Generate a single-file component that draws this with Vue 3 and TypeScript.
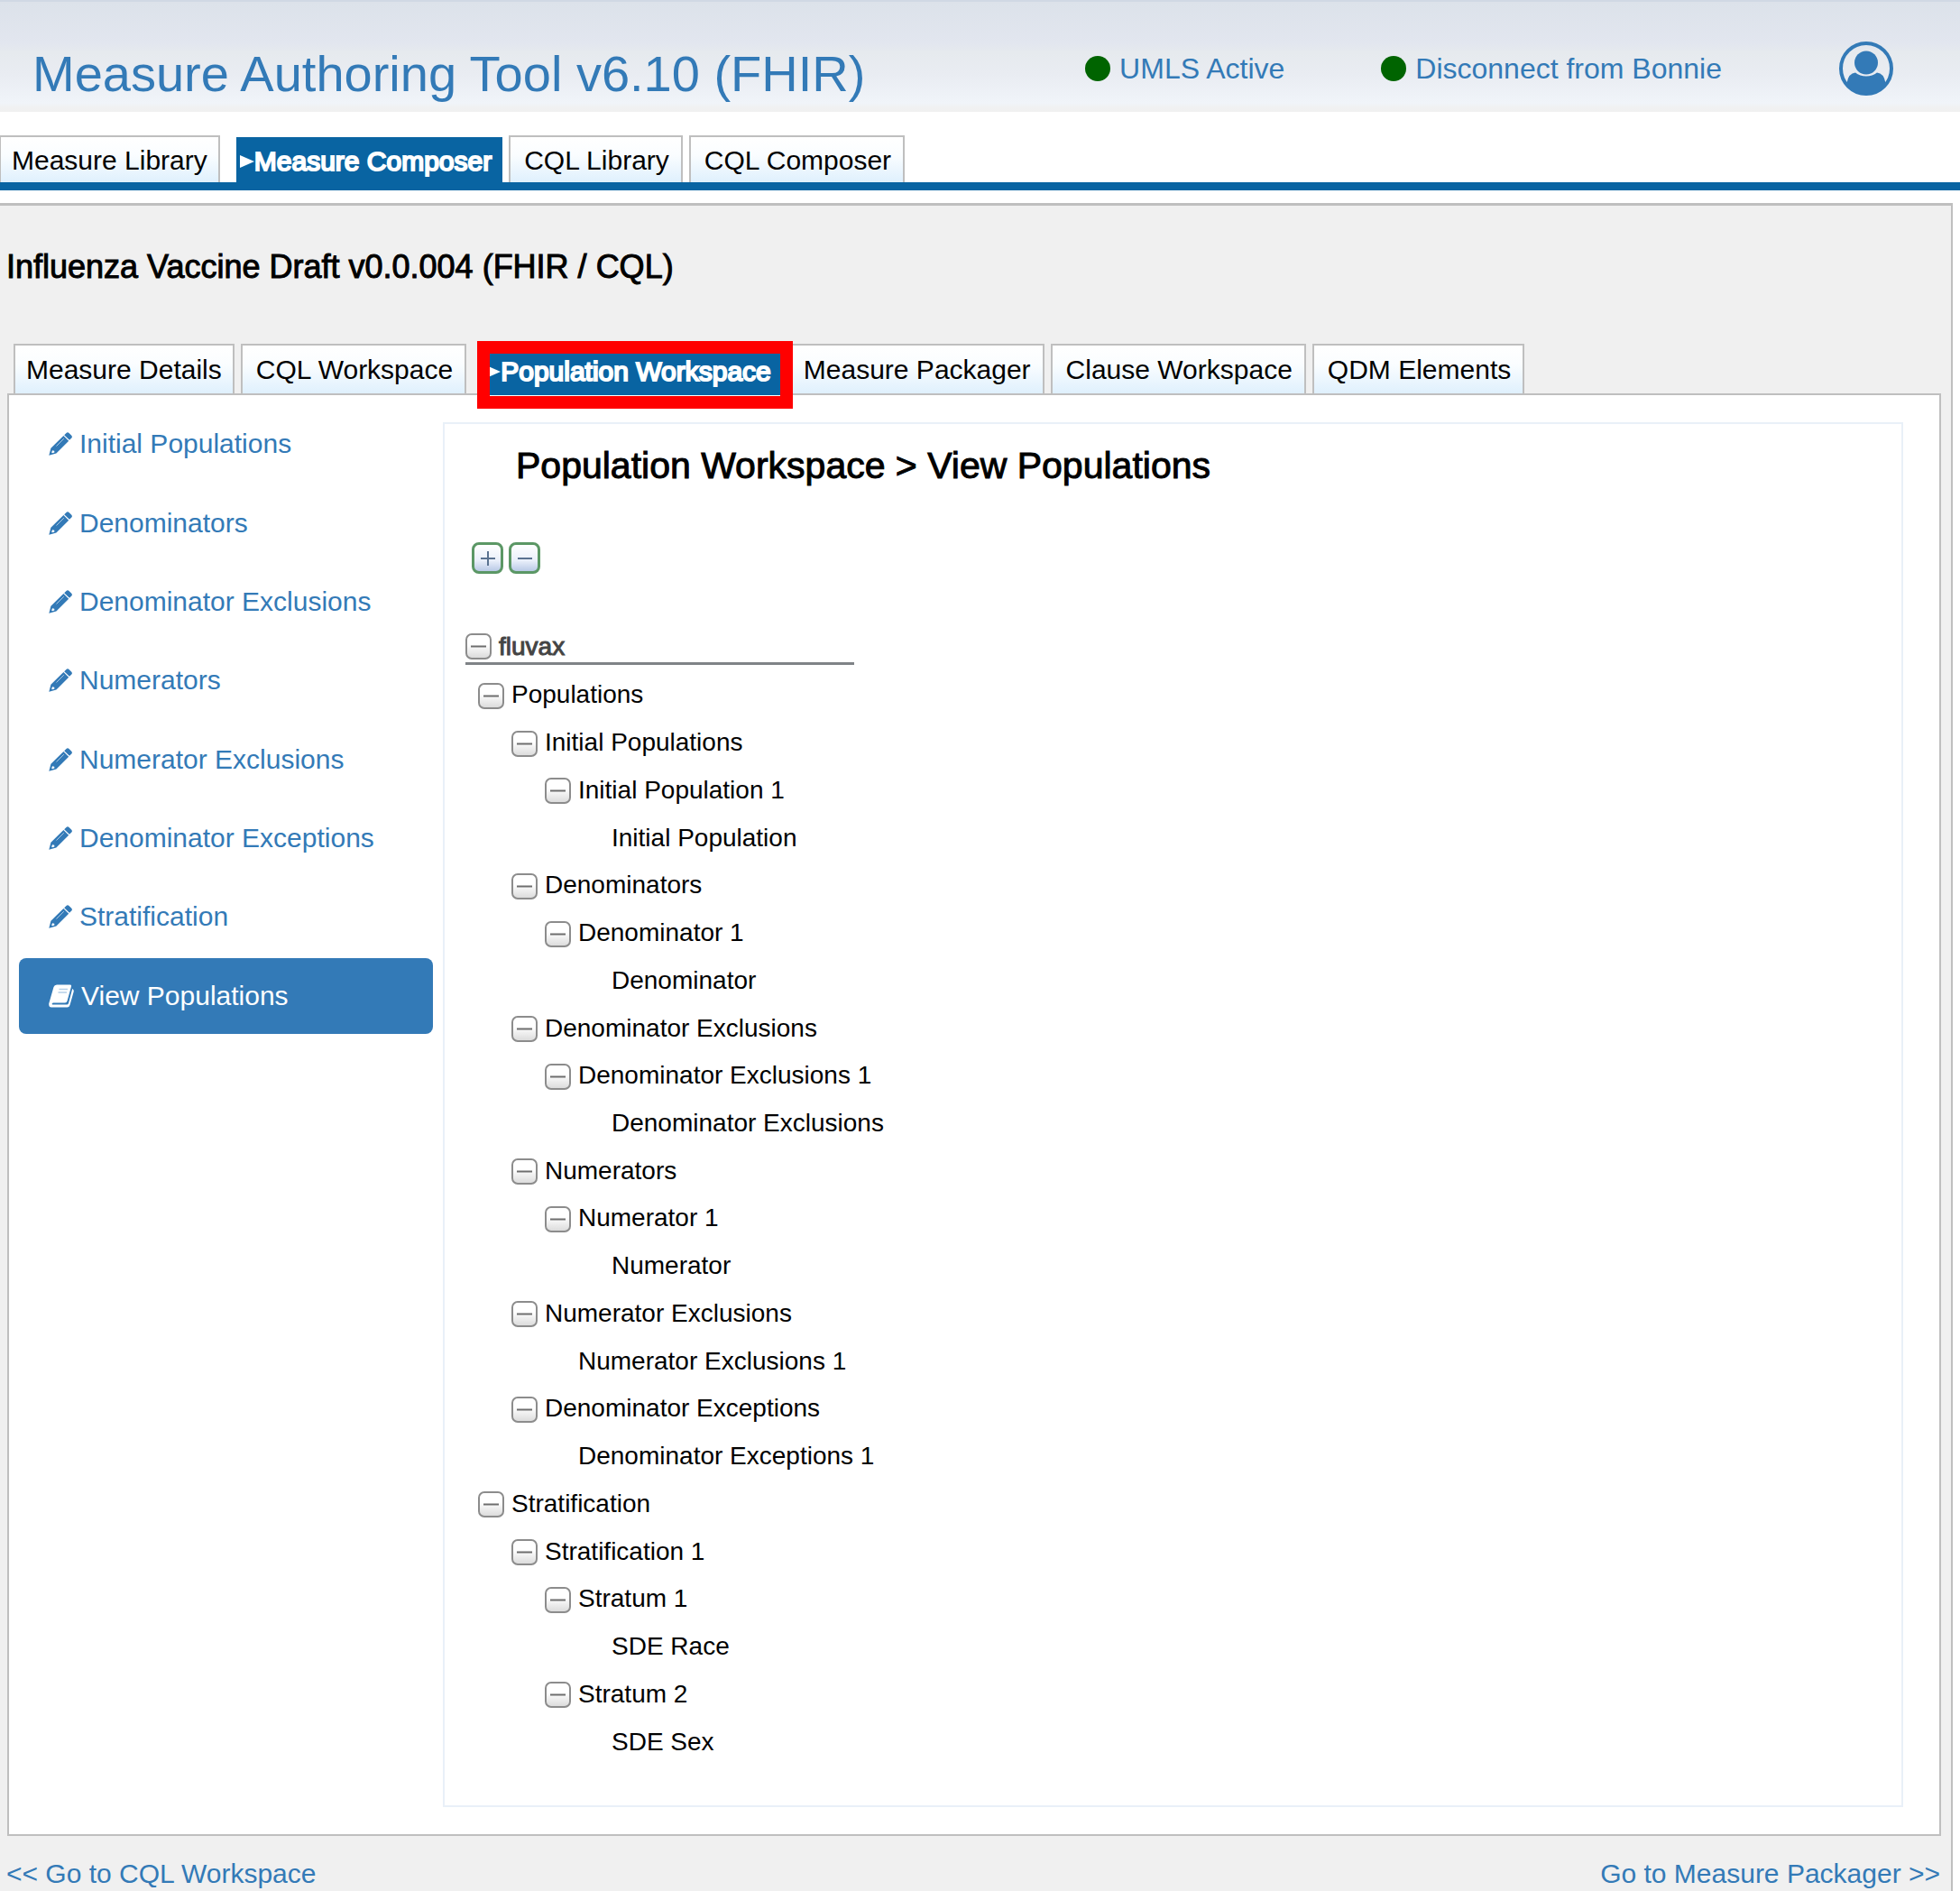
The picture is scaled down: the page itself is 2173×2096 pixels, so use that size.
<script setup lang="ts">
import { computed, ref } from 'vue'

interface Tab {
  label: string
  active?: boolean
}

interface TreeNode {
  label: string
  depth: number
  leaf?: boolean
}

const mainTabs: Tab[] = [
  { label: 'Measure Library' },
  { label: 'Measure Composer', active: true },
  { label: 'CQL Library' },
  { label: 'CQL Composer' },
]

const composerTabs: Tab[] = [
  { label: 'Measure Details' },
  { label: 'CQL Workspace' },
  { label: 'Population Workspace', active: true },
  { label: 'Measure Packager' },
  { label: 'Clause Workspace' },
  { label: 'QDM Elements' },
]

const sections: string[] = [
  'Initial Populations',
  'Denominators',
  'Denominator Exclusions',
  'Numerators',
  'Numerator Exclusions',
  'Denominator Exceptions',
  'Stratification',
]

const nodes: TreeNode[] = [
  { label: 'Populations', depth: 0 },
  { label: 'Initial Populations', depth: 1 },
  { label: 'Initial Population 1', depth: 2 },
  { label: 'Initial Population', depth: 3, leaf: true },
  { label: 'Denominators', depth: 1 },
  { label: 'Denominator 1', depth: 2 },
  { label: 'Denominator', depth: 3, leaf: true },
  { label: 'Denominator Exclusions', depth: 1 },
  { label: 'Denominator Exclusions 1', depth: 2 },
  { label: 'Denominator Exclusions', depth: 3, leaf: true },
  { label: 'Numerators', depth: 1 },
  { label: 'Numerator 1', depth: 2 },
  { label: 'Numerator', depth: 3, leaf: true },
  { label: 'Numerator Exclusions', depth: 1 },
  { label: 'Numerator Exclusions 1', depth: 2, leaf: true },
  { label: 'Denominator Exceptions', depth: 1 },
  { label: 'Denominator Exceptions 1', depth: 2, leaf: true },
  { label: 'Stratification', depth: 0 },
  { label: 'Stratification 1', depth: 1 },
  { label: 'Stratum 1', depth: 2 },
  { label: 'SDE Race', depth: 3, leaf: true },
  { label: 'Stratum 2', depth: 2 },
  { label: 'SDE Sex', depth: 3, leaf: true },
]

const rootOpen = ref(true)
const closed = ref<Set<number>>(new Set())

const visible = computed(() => {
  const rows: { node: TreeNode; index: number }[] = []
  if (!rootOpen.value) return rows
  let hiddenBelow = Infinity
  nodes.forEach((node, index) => {
    if (node.depth > hiddenBelow) return
    hiddenBelow = closed.value.has(index) ? node.depth : Infinity
    rows.push({ node, index })
  })
  return rows
})

function toggle(index: number): void {
  const next = new Set(closed.value)
  if (!next.delete(index)) next.add(index)
  closed.value = next
}

function expandAll(): void {
  rootOpen.value = true
  closed.value = new Set()
}

function collapseAll(): void {
  rootOpen.value = false
}
</script>

<template>
  <div class="page">
    <header class="banner">
      <h1>Measure Authoring Tool v6.10 (FHIR)</h1>
      <div class="account">
        <a href="#umls" class="status"><span class="dot"></span>UMLS Active</a>
        <a href="#bonnie" class="status"><span class="dot"></span>Disconnect from Bonnie</a>
        <button type="button" class="user" aria-label="Account">
          <svg viewBox="0 0 60 60" width="60" height="60" fill="#337ab7">
            <circle cx="30" cy="30" r="28" fill="none" stroke="#337ab7" stroke-width="4" />
            <circle cx="30" cy="23.500" r="13" />
            <path d="M8.500 46Q10.500 35 18 34.500Q23 38.500 30 38.500Q37 38.500 42 34.500Q49.500 35 51.500 46Q43 59 30 59Q17 59 8.500 46z" />
          </svg>
        </button>
      </div>
    </header>

    <nav class="tabs main-tabs" aria-label="Main">
      <a v-for="tab in mainTabs" :key="tab.label" href="#" class="tab" :class="{ active: tab.active }">
        <svg v-if="tab.active" class="arrow" viewBox="0 0 16 14" width="16" height="14"><path d="M0 0L16 7L0 14z" fill="#fff" /></svg>{{ tab.label }}
      </a>
    </nav>

    <main class="measure">
      <h2>Influenza Vaccine Draft v0.0.004 (FHIR / CQL)</h2>

      <nav class="tabs composer-tabs" aria-label="Measure composer">
        <a v-for="tab in composerTabs" :key="tab.label" href="#" class="tab" :class="{ active: tab.active }">
          <svg v-if="tab.active" class="arrow" viewBox="0 0 16 14" width="16" height="14"><path d="M0 0L16 7L0 14z" fill="#fff" /></svg>{{ tab.label }}
          <span v-if="tab.active" class="callout"></span>
        </a>
      </nav>

      <div class="workspace">
        <nav class="sections" aria-label="Population workspace">
          <a v-for="name in sections" :key="name" href="#">
            <svg viewBox="0 0 26 26" width="26" height="26" fill="#337ab7">
              <path d="M19.500 1Q21 -0.500 22.500 1L25.300 3.800Q26.500 5.200 25.300 6.500L23 8.800L17.200 3.200z" />
              <path fill-rule="evenodd" d="M16.400 4L22.200 9.700L8.400 23.600L0.300 25.700L2.400 17.700zM4 20.200L3.200 22.500L4 23.300L6.400 22.600L6.200 20.800z" />
              <path d="M8.500 15.500L16.800 7.200" stroke="#a9c7e2" stroke-width="1" />
            </svg>
            {{ name }}
          </a>
          <a href="#" class="current" aria-current="page">
            <svg viewBox="0 0 28 26" width="28" height="26">
              <path d="M9 0.500H23.500Q25.500 0.500 25 2.500L20.500 18.500Q20 20.500 18 20.500H5Q3 21 4 22.500H20Q21.500 22.500 22 21L26.200 5Q28.300 6 27.600 8.500L23.500 23Q22.700 25.500 20.500 25.500H3Q0 25.500 0.200 21.500L5.500 3Q6.300 0.500 9 0.500z" fill="#fff" />
              <path d="M11.500 5.500H21M10.500 9H20" stroke="#b5d0e8" stroke-width="1.500" />
            </svg>
            View Populations
          </a>
        </nav>

        <section class="viewer">
          <h3>Population Workspace &gt; View Populations</h3>
          <div class="tools">
            <button type="button" aria-label="Expand all" @click="expandAll">
              <svg viewBox="0 0 28 28" width="28" height="28"><path d="M6 14H22M14 6V22" stroke="#5a7290" stroke-width="2" /></svg>
            </button>
            <button type="button" aria-label="Collapse all" @click="collapseAll">
              <svg viewBox="0 0 28 28" width="28" height="28"><path d="M6 14H22" stroke="#5a7290" stroke-width="2" /></svg>
            </button>
          </div>

          <div class="root">
            <button type="button" class="toggle" aria-label="Toggle fluvax" @click="rootOpen = !rootOpen">
              <svg viewBox="0 0 25 25" width="25" height="25"><path :d="rootOpen ? 'M4 12.500H21' : 'M4 12.500H21M12.500 4V21'" stroke="#6e6e6e" stroke-width="2" /></svg>
            </button>
            fluvax
          </div>
          <ul class="tree">
            <li v-for="row in visible" :key="row.index" :class="['depth-' + row.node.depth, { leaf: row.node.leaf }]">
              <button v-if="!row.node.leaf" type="button" class="toggle" :aria-label="'Toggle ' + row.node.label" @click="toggle(row.index)">
                <svg viewBox="0 0 25 25" width="25" height="25"><path :d="closed.has(row.index) ? 'M4 12.500H21M12.500 4V21' : 'M4 12.500H21'" stroke="#6e6e6e" stroke-width="2" /></svg>
              </button>
              <span>{{ row.node.label }}</span>
            </li>
          </ul>
        </section>
      </div>

      <footer class="pager">
        <a href="#cql-workspace">&lt;&lt; Go to CQL Workspace</a>
        <a href="#measure-packager">Go to Measure Packager &gt;&gt;</a>
      </footer>
    </main>
  </div>
</template>

<style>
body {
  margin: 0;
  background: #fff;
}
</style>

<style scoped>
.page {
  display: flex;
  flex-direction: column;
  min-height: 100vh;
  font-family: "Liberation Sans", Arial, Helvetica, sans-serif;
  font-size: 30px;
  color: #000;
}

.page *,
.page {
  box-sizing: border-box;
}

a {
  color: #337ab7;
  text-decoration: none;
}

button {
  display: flex;
  align-items: center;
  justify-content: center;
  padding: 0;
  border: 0;
  background: none;
  cursor: pointer;
}

svg {
  display: block;
  flex: none;
}

h1,
h2,
h3 {
  margin: 0;
  font-weight: normal;
}

.banner {
  display: flex;
  justify-content: space-between;
  height: 124px;
  padding: 0 74px 0 36px;
  border-top: 2px solid #d0d8e4;
  background: linear-gradient(#dce2ea 0, #e2e6ef 46px, #e6eaee 56px, #e9ecf2 80px, #f0f4f9 112px, #f0f1f2 117px, #f0f0f0 122px);
}

h1 {
  padding-top: 48px;
  font-size: 56px;
  line-height: 64px;
  color: #337ab7;
}

.account {
  display: flex;
  align-items: center;
  height: 148px;
}

.status {
  display: flex;
  align-items: center;
  gap: 10px;
  margin-right: 107px;
  font-size: 32px;
  line-height: 36px;
}

.dot {
  width: 28px;
  height: 28px;
  border-radius: 50%;
  background: #006400;
}

.status + .status {
  margin-right: 130px;
}

.tabs {
  display: flex;
  gap: 7px;
}

.tab {
  display: flex;
  align-items: center;
  height: 52px;
  padding: 2px 13px 0 15px;
  border: 2px solid #bfbfbf;
  border-bottom: 0;
  background: linear-gradient(#fff, #fafdff 40%, #dff0fd);
  color: #000;
  white-space: nowrap;
}

.tab:first-child {
  padding-left: 12px;
  padding-right: 12px;
}

.tab.active {
  position: relative;
  height: 50px;
  margin: 2px 0 0 11px;
  padding: 4px 12px 0 4px;
  border: 0;
  background: #0964a2;
  color: #fff;
  -webkit-text-stroke: 2px #fff;
}

.main-tabs {
  margin-top: 26px;
  border-bottom: 9px solid #0964a2;
}

.main-tabs .tab:first-child {
  border-left-width: 1px;
}

.measure {
  flex: 1;
  margin: 14px 8px 0 0;
  border-top: 3px solid #bfbfbf;
  border-right: 2px solid #bfbfbf;
  background: #f0f0f0;
}

.user {
  width: 60px;
  height: 60px;
}

h2 {
  padding: 48px 7px 0;
  font-size: 36px;
  line-height: 40px;
  -webkit-text-stroke: 1px #000;
}

.composer-tabs {
  margin-top: 65px;
  padding-left: 15px;
}

.composer-tabs .tab {
  height: 55px;
  padding-top: 0;
}

.composer-tabs .tab.active {
  height: 57px;
  margin: 0 0 -2px 11px;
  padding-top: 5px;
}

.callout {
  position: absolute;
  inset: -3px -12px -15px -6px;
  z-index: 1;
  border: 14px solid #f00;
}

.workspace {
  display: flex;
  align-items: flex-start;
  margin: 0 11px 0 8px;
  padding: 12px 40px 30px 11px;
  border: 2px solid #bfbfbf;
  background: #fff;
}

.sections {
  display: grid;
  grid-auto-rows: 1fr;
  gap: 3px;
  width: 459px;
  height: 696px;
  flex: none;
}

.sections a {
  display: flex;
  align-items: center;
  gap: 8px;
  padding-left: 33px;
  border-radius: 8px;
}

.sections .current {
  background: #337ab7;
  color: #fff;
}

.viewer {
  flex: 1;
  min-width: 0;
  margin: 18px 0 0 11px;
  padding: 22px 22px 44px 23px;
  border: 2px solid #e9f0f8;
}

h3 {
  padding-left: 56px;
  font-size: 41px;
  line-height: 48px;
  -webkit-text-stroke: 1px #000;
}

.tools {
  display: flex;
  gap: 6px;
  margin: 61px 0 0 7px;
}

.tools button {
  width: 35px;
  height: 35px;
  border: 3px solid #5b9765;
  border-radius: 8px;
  background: linear-gradient(#fff, #e9effa 60%, #b9c9e6);
}

.toggle {
  width: 29px;
  height: 29px;
  border: 2px solid #8c8c8c;
  border-radius: 7px;
  background: linear-gradient(#fff 40%, #dcdcdc);
}

.root {
  display: flex;
  align-items: center;
  gap: 8px;
  width: 431px;
  height: 38px;
  margin-top: 63px;
  border-bottom: 3px solid #7f8387;
  font-size: 28px;
  color: #444;
  -webkit-text-stroke: 1px #444;
}

.tree {
  display: grid;
  grid-template-rows: repeat(23, 1fr);
  height: 1213px;
  margin: 7px 0 0;
  padding: 0 0 0 14px;
  list-style: none;
  font-size: 28px;
}

.tree li {
  display: flex;
  align-items: center;
  gap: 8px;
}

.tree .toggle {
  margin-top: 2px;
}

.tree .leaf span {
  padding-left: 37px;
}

.depth-1 {
  padding-left: 37px;
}

.depth-2 {
  padding-left: 74px;
}

.depth-3 {
  padding-left: 111px;
}

.pager {
  display: flex;
  justify-content: space-between;
  padding: 23px 12px 0 7px;
  line-height: 38px;
}
</style>
